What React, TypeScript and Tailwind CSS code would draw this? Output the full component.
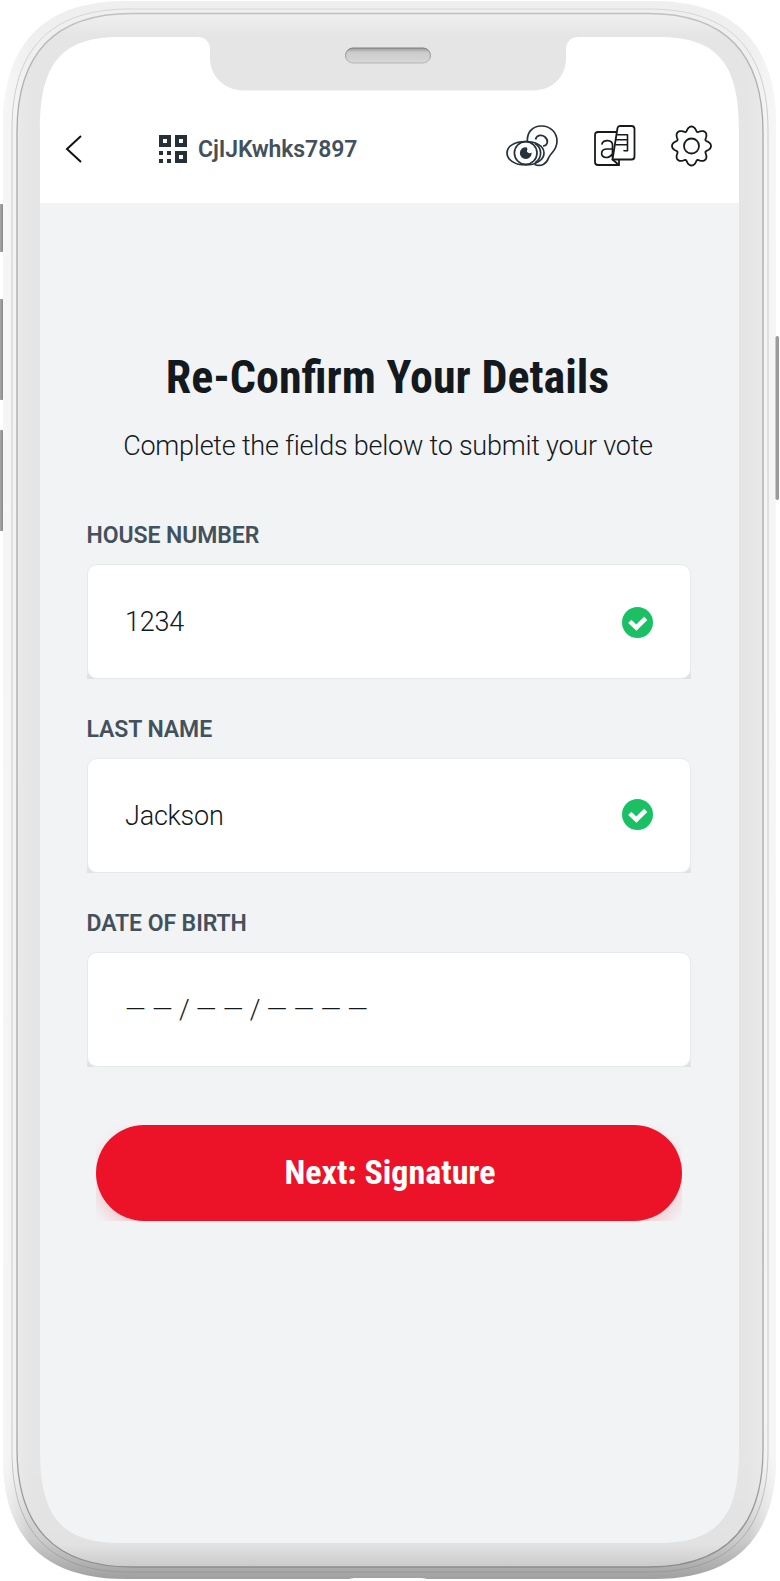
import React from "react";

const FrameArt = () => (
  <svg className="absolute inset-0 h-[1581px] w-[780px]" viewBox="0 0 780 1581" fill="none">
    <defs>
      <linearGradient id="shell" x1="0" y1="0" x2="0" y2="1">
        <stop offset="0" stopColor="#efefef" />
        <stop offset="0.92" stopColor="#eeeeee" />
        <stop offset="0.975" stopColor="#cccccc" />
        <stop offset="1" stopColor="#a0a0a0" />
      </linearGradient>
      <linearGradient id="shellEdge" x1="0" y1="0" x2="1" y2="0">
        <stop offset="0" stopColor="#fafafa" />
        <stop offset="0.035" stopColor="#fafafa" stopOpacity="0" />
        <stop offset="0.965" stopColor="#fafafa" stopOpacity="0" />
        <stop offset="1" stopColor="#fafafa" />
      </linearGradient>
      <linearGradient id="bezel" x1="0" y1="14" x2="0" y2="1568" gradientUnits="userSpaceOnUse">
        <stop offset="0" stopColor="#f0f0f0" />
        <stop offset="0.014" stopColor="#e5e5e5" />
        <stop offset="0.93" stopColor="#e5e5e5" />
        <stop offset="0.985" stopColor="#e2e2e2" />
        <stop offset="1" stopColor="#c9c9c9" />
      </linearGradient>
      <linearGradient id="sideLight" x1="17" y1="0" x2="763" y2="0" gradientUnits="userSpaceOnUse">
        <stop offset="0" stopColor="#efefef" stopOpacity="0.5" />
        <stop offset="0.027" stopColor="#e5e5e5" stopOpacity="0" />
        <stop offset="0.973" stopColor="#e5e5e5" stopOpacity="0" />
        <stop offset="1" stopColor="#efefef" stopOpacity="0.5" />
      </linearGradient>
      <linearGradient id="groove" x1="0" y1="0" x2="0" y2="1581" gradientUnits="userSpaceOnUse">
        <stop offset="0" stopColor="#c4c4c4" />
        <stop offset="0.08" stopColor="#a9a9a9" />
        <stop offset="0.9" stopColor="#a9a9a9" />
        <stop offset="1" stopColor="#8a8a8a" />
      </linearGradient>
      <linearGradient id="speaker" x1="0" y1="0" x2="0" y2="1">
        <stop offset="0" stopColor="#999999" />
        <stop offset="0.3" stopColor="#cbcbcb" />
        <stop offset="1" stopColor="#d8d8d8" />
      </linearGradient>
      <linearGradient id="speakerRim" x1="0" y1="0" x2="0" y2="1">
        <stop offset="0" stopColor="#7c7c7c" />
        <stop offset="1" stopColor="#b8b8b8" />
      </linearGradient>
      <linearGradient id="key" x1="0" y1="0" x2="1" y2="0">
        <stop offset="0" stopColor="#b4b4b4" />
        <stop offset="1" stopColor="#7c7c7c" />
      </linearGradient>
    </defs>
    <rect x="-1" y="204" width="5" height="48" rx="2" fill="url(#key)" />
    <rect x="-1" y="299" width="5" height="101" rx="2" fill="url(#key)" />
    <rect x="-1" y="430" width="5" height="101" rx="2" fill="url(#key)" />
    <path d="M3 125C3 44 44 1 125 1H654C735 1 776 44 776 125V1457C776 1538 735 1579 654 1579H125C44 1579 3 1538 3 1457Z" fill="url(#shell)" />
    <path d="M3 125C3 44 44 1 125 1H654C735 1 776 44 776 125V1457C776 1538 735 1579 654 1579H125C44 1579 3 1538 3 1457Z" fill="url(#shellEdge)" opacity=".7" />
    <rect x="775.500" y="336" width="3.500" height="164" rx="1.700" fill="#9b9b9b" />
    <path d="M346 1581C350 1578 352 1578 358 1578H418C424 1578 426 1578 431 1581Z" fill="#fff" />
    <path d="M12 130C12 50 49 9 130 9H649C730 9 768 50 768 130V1451C768 1531 730 1572 649 1572H130C49 1572 12 1531 12 1451Z" stroke="url(#groove)" strokeOpacity=".55" />
    <path d="M17 132C17 55 54 13.5 132 13.5H648C726 13.5 763 55 763 132V1449C763 1526 726 1567 648 1567H132C54 1567 17 1526 17 1449Z" fill="url(#bezel)" />
    <path d="M17 132C17 55 54 13.5 132 13.5H648C726 13.5 763 55 763 132V1449C763 1526 726 1567 648 1567H132C54 1567 17 1526 17 1449Z" fill="url(#sideLight)" stroke="url(#groove)" strokeWidth="1.3" />
    <path d="M40 130C40 65 60 37 120 37H197Q209 37 210 49V58C210 76 224 90.500 244 90.500H533C553 90.500 566 76 566 58V49Q567 37 579 37H658C719 37 739 65 739 130V203H40Z" fill="#fff" />
    <path d="M40 203H739V1450C739 1515 719 1543 658 1543H120C60 1543 40 1515 40 1450Z" fill="#f2f3f5" />
    <rect x="345.500" y="48" width="85" height="15" rx="7.500" fill="url(#speaker)" stroke="url(#speakerRim)" />
  </svg>
);

const QrIcon = () => (
  <svg className="h-7 w-7" viewBox="0 0 28 28" fill="#253039">
    <path fillRule="evenodd" d="M0 0h12v12H0ZM4 4v4h4V4ZM16 0h12v12H16ZM20 4v4h4V4ZM16 16h12v12H16ZM20 20v4h4v-4Z" />
    <path d="M0 16h4v4H0Zm8 0h4v4H8ZM0 24h4v4H0Zm8 0h4v4H8Z" />
  </svg>
);

const SensesIcon = () => (
  <svg className="h-[42px] w-[52px]" viewBox="0 0 52 42" fill="none" stroke="#25323b" strokeWidth="1.7">
    <path d="M21.500 17C20.500 8 26 1 35.500 1C45 1 51 8 51 16C51 26 45 27 42.500 33C40.500 39 35 42 28.500 39.500" />
    <path d="M29.500 14.500C31 9.500 36 9.500 39 12C43.500 16 41 21 37 21" />
    <path d="M1 28C1 21 9 16.500 19.500 16.500S38 21 38 28S30 40 19.500 40S1 35 1 28Z" fill="#fff" />
    <circle cx="19.700" cy="28" r="11.300" />
    <path d="M20.500 22.200a5.900 5.900 0 1 0 5.100 5.200c-1 1-2.800 1-3.800 0c-1.200-.8-1.100-2.200-.2-3.200Z" fill="#25323b" stroke="none" />
    <path d="M29 18.500C36.500 23 36.500 33 29 38" />
  </svg>
);

const TranslateIcon = () => (
  <svg className="h-[42px] w-[42px]" viewBox="0 0 42 42" fill="none" stroke="#171b1e" strokeWidth="1.8" strokeLinejoin="round" strokeLinecap="round">
    <path d="M23 7H4Q1 7 1 10V37Q1 40 4 40H25V34.500" />
    <path d="M8 19C9 14.500 18.500 14 18.500 20V32M18 24H13C6 24 6 32.500 12 32.500C15 32.500 17 31 18.300 29" strokeWidth="1.700" />
    <path d="M26 1H37.500Q40.500 1 40.500 4V31.500Q40.500 34.500 37.500 34.500H18.500L23.500 3Q24 1 26 1Z" fill="#fff" />
    <path d="M18.500 34.500L25 40" />
    <path d="M23.500 9.800H33.500M22.500 14.800H33.500M22 19.800H33.500M33.500 9.800V25.800H30" strokeWidth="1.600" />
  </svg>
);

const gearOutline =
  Array.from({ length: 144 }, (_, i) => {
    const a = (i / 144) * Math.PI * 2;
    const r = 17.300 + 2.200 * Math.cos(8 * a);
    const t = a + 0.035 * Math.sin(8 * a);
    return `${i ? "L" : "M"}${(20.5 + r * Math.sin(t)).toFixed(2)} ${(21 - r * Math.cos(t)).toFixed(2)}`;
  }).join("") + "Z";

const GearIcon = () => (
  <svg className="h-[42px] w-[42px]" viewBox="0 0 42 42" fill="none" stroke="#171b1e" strokeWidth="1.8" strokeLinejoin="round">
    <circle cx="20.500" cy="21" r="7.500" />
    <path d={gearOutline} />
  </svg>
);

const CheckIcon = () => (
  <svg className="h-[31px] w-[31px]" viewBox="0 0 31 31" fill="none">
    <circle cx="15.500" cy="15.500" r="15.500" fill="#1bbf64" />
    <path d="m7.800 14.300 6.600 6.300 9.300-9.300" stroke="#fff" strokeWidth="4.600" />
  </svg>
);

type FieldProps = { label: string; value: string; valid?: boolean; raised?: boolean };

function Field({ label, value, valid, raised }: FieldProps) {
  return (
    <div className="h-[194px]">
      <div className="h-[43px] pt-[1px] text-[23px] leading-[27px] font-semibold tracking-[-0.08px] text-[#43515c]">{label}</div>
      <div className="h-[115px] w-[604.500px] bg-linear-to-b from-transparent from-80% to-[#dfe1e4]">
        <div className="flex h-[115px] items-center justify-between rounded-[10px] border border-[#e8e9ec] bg-white pr-[37.500px] pl-[37.500px]">
          <span className="pt-[1px] text-[27px] leading-8 font-light tracking-[-0.23px] whitespace-pre text-[#13191d]">{value}</span>
          {valid && <div className={raised ? "-mt-[3px]" : "mt-[1px]"}><CheckIcon /></div>}
        </div>
      </div>
    </div>
  );
}

export default function App() {
  return (
    <main className="relative h-[1581px] w-[780px] overflow-hidden bg-white font-['Roboto',sans-serif]">
      <FrameArt />
      <div className="relative flex h-full flex-col px-10 pt-[91px]">
        <header className="flex h-[112px] items-center pr-[27px] pl-6">
          <svg className="mt-1 h-7 w-5" viewBox="0 0 20 28" fill="none" stroke="#101315" strokeWidth="2"><path d="M17 1 3 14l14 13" /></svg>
          <div className="ml-[75px] flex items-center gap-[11px] pt-1">
            <QrIcon />
            <span className="pt-[1px] text-[23px] leading-7 font-semibold tracking-[-0.1px] text-[#43515c]">CjIJKwhks7897</span>
          </div>
          <div className="ml-auto flex items-center pb-[2px]">
            <SensesIcon /><div className="mr-[35px] ml-9"><TranslateIcon /></div><GearIcon />
          </div>
        </header>
        <section className="pt-[146px] pr-[4px] text-center">
          <h1 className="pr-[1px] text-[46px] leading-[56px] font-bold text-[#13191d] [font-stretch:75%]">Re-Confirm Your Details</h1>
          <p className="mt-[25px] text-[27px] leading-8 font-light tracking-[-0.23px] text-[#13191d] [font-variant-ligatures:common-ligatures]">Complete the fields below to submit your vote</p>
        </section>
        <form className="mt-[59px] pl-[46.500px]" onSubmit={(e) => e.preventDefault()}>
          <Field label="HOUSE NUMBER" value="1234" valid />
          <Field label="LAST NAME" value="Jackson" valid raised />
          <Field label="DATE OF BIRTH" value="— — / — — / — — — —" />
          <div className="mt-[22px] ml-[9.500px] h-[96px] w-[586px] overflow-hidden">
            <button className="flex h-[96px] w-[586px] items-center justify-center rounded-full bg-[#ec1227] pb-[2px] pl-[2px] text-[34px] font-bold text-white shadow-[0_8px_16px_rgba(236,18,39,0.18)] [font-stretch:75%]">Next: Signature</button>
          </div>
        </form>
      </div>
    </main>
  );
}
